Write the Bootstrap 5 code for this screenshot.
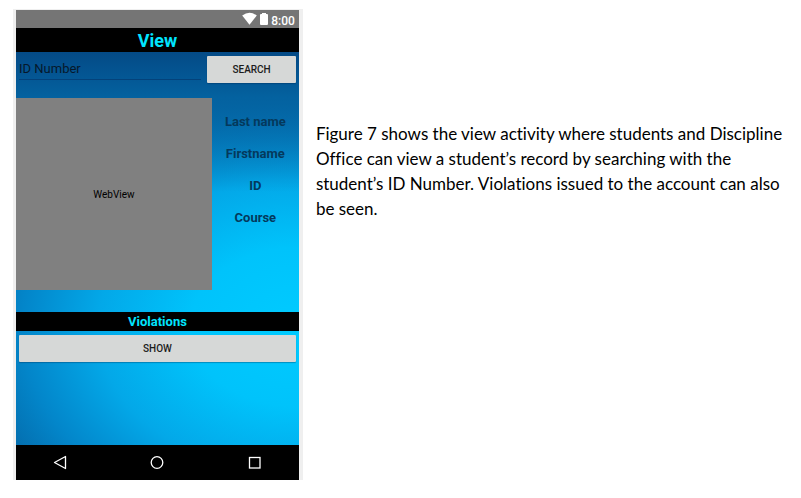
<!DOCTYPE html>
<html lang="en">
<head>
<meta charset="utf-8">
<meta name="viewport" content="width=device-width, initial-scale=1">
<title>View</title>
<link href="https://cdn.jsdelivr.net/npm/bootstrap@5.3.0/dist/css/bootstrap.min.css" rel="stylesheet">
<style>
  body { background: #fff; color: #000; }
  .figure-grid { display: grid; grid-template-columns: 3fr 5fr; column-gap: 13px; padding: 9px 2px 18px 13px; }
  .device { background: #efefef; padding: 1px 4px 0 3px; font-family: Roboto, "Noto Sans", sans-serif; }
  .status-bar { background: #757575; height: 18px; padding-right: 4px; gap: 2px; font-size: 12px; line-height: 22px; font-weight: 500; }
  .screen-title { background: #000; color: #00e5ff; font-size: 18px; line-height: 25px; height: 24px; }
  .section-title { background: #000; color: #00e5ff; font-size: 13px; line-height: 20px; height: 19px; }
  .screen-body {
    background:
      linear-gradient(to bottom, #044a86 0, #0462a0 46px, rgba(4, 125, 190, 0) 140px),
      radial-gradient(148% 78% at 100% 70%, #00cbff 0%, #00c3fb 26%, #03a8e8 48%, #0386ca 66%, #0466a5 82%, #034b88 100%);
  }
  .search-row { padding: 4px 3px 0; gap: 6px; }
  .id-field { background: transparent; border: 0; border-bottom: 1px solid #04427a; border-radius: 0; height: 24px; min-width: 0; padding: 2px 0 0; color: #06182b; font-size: 13px; line-height: 20px; }
  .id-field::placeholder { color: #06182b; opacity: 1; }
  .id-field:focus { outline: 0; border-bottom-color: #00e5ff; }
  .key { background: #d6d8d7; border: 0; border-radius: 1px; color: #1c1c1c; font-size: 10px; font-weight: 500; line-height: 27px; padding: 0; box-shadow: 0 1px 1px rgba(0, 40, 80, .35); }
  .key:hover { background: #c8caca; }
  .search-key { flex: 0 0 32%; }
  .record { display: grid; grid-template-columns: 9fr 4fr; margin: 15px 0 22px; }
  .web-view { background: #808080; min-height: 192px; font-size: 10px; }
  .names { padding-top: 8px; color: #04395c; font-size: 13px; line-height: 32px; }
  .show-row { padding: 4px 3px 83px; }
  .nav-keys { background: #000; height: 35px; padding: 0 36px; }
  .nav-keys button { background: none; border: 0; padding: 0; line-height: 0; }
  .caption-text { padding: 112px 13px 0 0; font-family: Lato, "Open Sans", sans-serif; font-size: 17px; line-height: 25px; font-variant-ligatures: none; }
</style>
</head>
<body>
<main class="figure-grid">
  <section class="device" aria-label="View activity">
    <div class="status-bar d-flex justify-content-end text-white">
      <svg width="15" height="18" viewBox="0 0 15 18" aria-hidden="true"><path fill="#fff" d="M.2 5.500Q7.500 0 14.800 5.500L7.500 14.800Z"/></svg>
      <svg width="10" height="18" viewBox="0 0 10 18" aria-hidden="true"><path fill="#fff" d="M1 5q0-1 1-1h1V3h4v1h1q1 0 1 1v9q0 1-1 1H2q-1 0-1-1Z"/></svg>
      <span>8:00</span>
    </div>
    <h1 class="screen-title fw-bold text-center m-0">View</h1>
    <div class="screen-body">
      <form class="search-row d-flex">
        <input class="id-field flex-grow-1" type="text" placeholder="ID Number" aria-label="ID Number">
        <button class="key search-key" type="button">SEARCH</button>
      </form>
      <div class="record">
        <div class="web-view d-flex align-items-center justify-content-center">WebView</div>
        <ul class="names list-unstyled fw-bold text-center m-0">
          <li>Last name</li>
          <li>Firstname</li>
          <li>ID</li>
          <li>Course</li>
        </ul>
      </div>
      <h2 class="section-title fw-bold text-center m-0">Violations</h2>
      <div class="show-row d-grid">
        <button class="key" type="button">SHOW</button>
      </div>
    </div>
    <nav class="nav-keys d-flex align-items-center justify-content-between" aria-label="System keys">
      <button type="button" aria-label="Back"><svg width="16" height="16" viewBox="0 0 16 16"><path fill="none" stroke="#fff" stroke-width="1.300" stroke-linejoin="round" d="M13.500 1.500v12L2.500 7.500Z"/></svg></button>
      <button type="button" aria-label="Home"><svg width="16" height="16" viewBox="0 0 16 16"><circle cx="8" cy="7.500" r="5.800" fill="none" stroke="#fff" stroke-width="1.300"/></svg></button>
      <button type="button" aria-label="Recent"><svg width="16" height="16" viewBox="0 0 16 16"><rect x="2.500" y="2.500" width="10.500" height="10.500" fill="none" stroke="#fff" stroke-width="1.300"/></svg></button>
    </nav>
  </section>
  <p class="caption-text m-0">Figure 7 shows the view activity where students and Discipline Office can view a student’s record by searching with the student’s ID Number. Violations issued to the account can also be seen.</p>
</main>
<script src="https://cdn.jsdelivr.net/npm/bootstrap@5.3.0/dist/js/bootstrap.bundle.min.js"></script>
</body>
</html>
